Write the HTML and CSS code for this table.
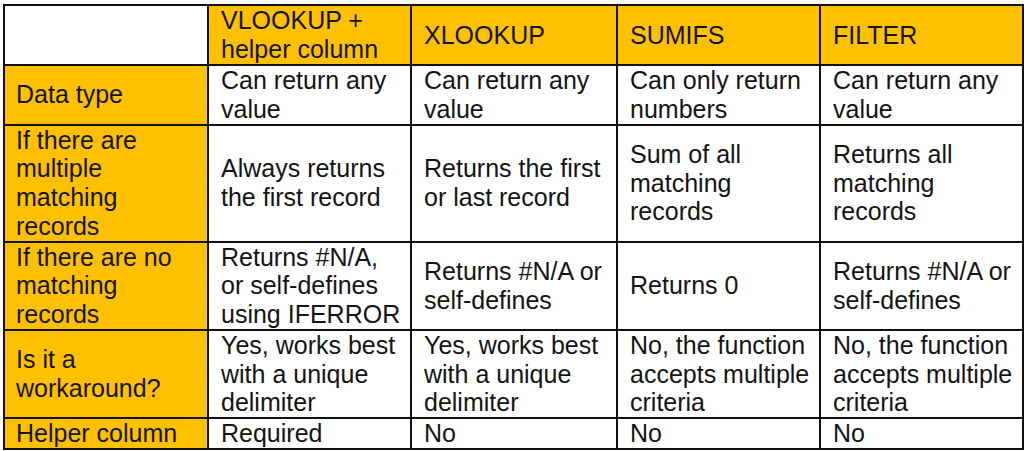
FILE: index.html
```html
<!DOCTYPE html>
<html lang="en">
<head>
<meta charset="utf-8">
<title>Lookup comparison</title>
<link rel="stylesheet" href="styles.css">
</head>
<body>
<table class="cmp">
  <colgroup>
    <col class="c1"><col class="c2"><col class="c3"><col class="c4"><col class="c5">
  </colgroup>
  <tr>
    <th class="blank"></th>
    <th class="hd">VLOOKUP +<br>helper column</th>
    <th class="hd">XLOOKUP</th>
    <th class="hd">SUMIFS</th>
    <th class="hd">FILTER</th>
  </tr>
  <tr>
    <th class="rh">Data type</th>
    <td>Can return any<br>value</td>
    <td>Can return any<br>value</td>
    <td>Can only return<br>numbers</td>
    <td>Can return any<br>value</td>
  </tr>
  <tr>
    <th class="rh">If there are<br>multiple<br>matching<br>records</th>
    <td>Always returns<br>the first record</td>
    <td>Returns the first<br>or last record</td>
    <td>Sum of all<br>matching<br>records</td>
    <td>Returns all<br>matching<br>records</td>
  </tr>
  <tr>
    <th class="rh">If there are no<br>matching<br>records</th>
    <td>Returns #N/A,<br>or self-defines<br>using IFERROR</td>
    <td>Returns #N/A or<br>self-defines</td>
    <td>Returns 0</td>
    <td>Returns #N/A or<br>self-defines</td>
  </tr>
  <tr>
    <th class="rh">Is it a<br>workaround?</th>
    <td>Yes, works best<br>with a unique<br>delimiter</td>
    <td>Yes, works best<br>with a unique<br>delimiter</td>
    <td>No, the function<br>accepts multiple<br>criteria</td>
    <td>No, the function<br>accepts multiple<br>criteria</td>
  </tr>
  <tr>
    <th class="rh">Helper column</th>
    <td>Required</td>
    <td>No</td>
    <td>No</td>
    <td>No</td>
  </tr>
</table>
</body>
</html>
```

FILE: styles.css
```css
html, body {
  margin: 0;
  padding: 0;
  background: #ffffff;
}

body {
  padding: 4px 0 0 3px;
}

.cmp {
  border-collapse: collapse;
  table-layout: fixed;
  width: 1019px;
  font-family: "Liberation Sans", Arial, sans-serif;
  font-size: 25px;
  line-height: 28.75px;
  color: #141414;
}

.c1 { width: 204px; }
.c2 { width: 203px; }
.c3 { width: 206px; }
.c4 { width: 203px; }
.c5 { width: 203px; }

.cmp th,
.cmp td {
  border: 2px solid #121212;
  padding: 0 0 0 12px;
  vertical-align: middle;
  text-align: left;
  font-weight: normal;
  white-space: nowrap;
  overflow: hidden;
}

.cmp .hd,
.cmp .rh {
  background: #ffc000;
}

.cmp .blank {
  background: #ffffff;
  height: 58px;
}

.cmp .rh {
  padding-left: 11px;
}
```
